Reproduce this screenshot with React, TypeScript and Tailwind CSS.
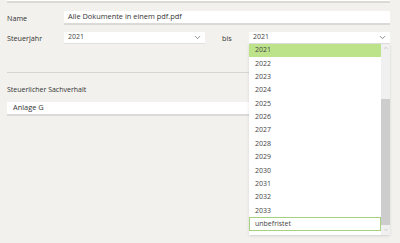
import { ChevronDown, ChevronUp } from "lucide-react";

const years = ["2021", "2022", "2023", "2024", "2025", "2026", "2027", "2028", "2029", "2030", "2031", "2032", "2033"];

function Select({ value, open }: { value: string; open?: boolean }) {
  return (
    <div className="relative flex-1">
      <div className="flex h-[12px] items-center justify-between bg-white pl-[4px] pr-[3px] text-[7px] text-[#444] border-b border-[#e0dfdc]">
        <span>{value}</span>
        <ChevronDown size={9} strokeWidth={1.75} className="text-[#555]" />
      </div>
      {open && (
        <div className="absolute left-0 top-full z-10 flex h-[191px] w-full bg-white shadow-sm">
          <div className="flex flex-1 flex-col">
            {years.map((y, i) => (
              <div
                key={y}
                className={`flex h-[13.35px] items-center pl-[6px] text-[7px] text-[#444] ${i === 0 ? "bg-[#bde38a]" : ""}`}
              >
                {y}
              </div>
            ))}
            <div className="flex h-[13.35px] items-center border border-[#a6d27f] pl-[5px] text-[7px] text-[#444]">
              unbefristet
            </div>
          </div>
          <div className="flex w-[9px] flex-col bg-[#f0f0f0]">
            <div className="flex h-[8px] items-center justify-center">
              <ChevronUp size={6} strokeWidth={2} className="text-[#aaa]" />
            </div>
            <div className="mt-[47px] h-[126px] bg-[#cdcdcd]" />
            <div className="flex h-[9px] items-center justify-center">
              <ChevronDown size={6} strokeWidth={2} className="text-[#aaa]" />
            </div>
          </div>
        </div>
      )}
    </div>
  );
}

export default function App() {
  return (
    <div
      className="h-[243px] w-[400px] overflow-hidden bg-[#f2f1ee] pl-[7px] pr-[10px] text-[#333]"
      style={{ fontFamily: '"Open Sans", "Noto Sans", sans-serif' }}
    >
      <div className="h-[3px] bg-white border-b-2 border-[#dcdad6]" />

      <div className="mt-[8px] flex h-[14px] items-center">
        <div className="w-[57px] text-[7.2px]">Name</div>
        <div className="flex h-[14px] flex-1 items-center bg-white pl-[4px] text-[7.4px] border-b-2 border-[#dcdad6]">
          Alle Dokumente in einem pdf.pdf
        </div>
      </div>

      <div className="mt-[7px] flex h-[12px] items-center">
        <div className="w-[57px] text-[7.2px]">Steuerjahr</div>
        <div className="w-[141px]">
          <Select value="2021" />
        </div>
        <div className="w-[44px] pl-[17px] text-[7.2px]">bis</div>
        <Select value="2021" open />
      </div>

      <div className="mt-[28px] h-[1px] bg-[#d8d6d2]" />

      <div className="mt-[13px] text-[7px] leading-[8px]">Steuerlicher Sachverhalt</div>
      <div className="mt-[8px] flex h-[14px] items-center bg-white pl-[6px] text-[7.4px] border-b-2 border-[#dcdad6]">
        Anlage G
      </div>
    </div>
  );
}
